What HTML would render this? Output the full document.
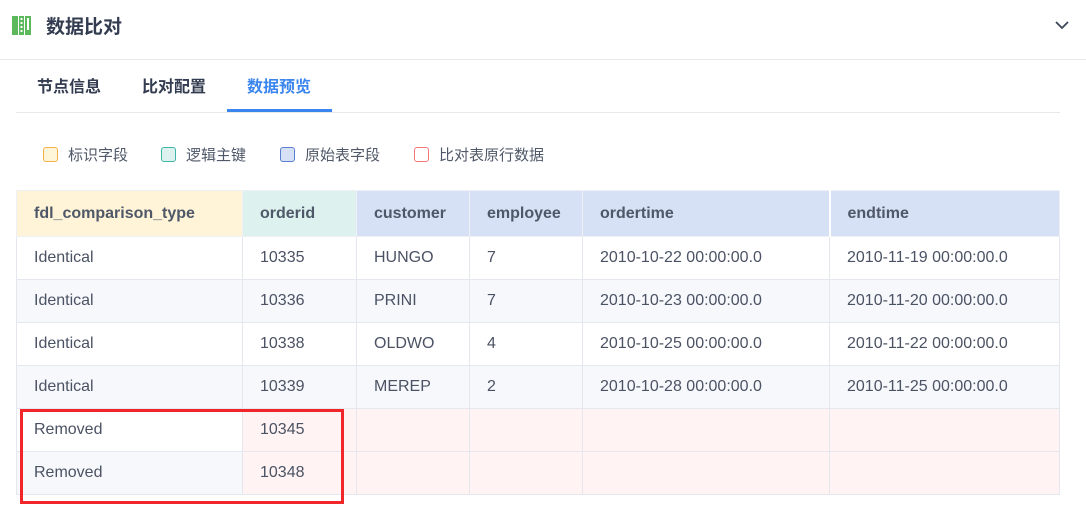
<!DOCTYPE html>
<html><head><meta charset="utf-8"><style>
*{margin:0;padding:0;box-sizing:border-box}
body{width:1086px;height:505px;background:#fff;font-family:"Liberation Sans","Noto Sans CJK SC",sans-serif;color:#333c4c;position:relative;overflow:hidden}
.abs{position:absolute}
.title{left:46px;top:14px;font-size:19px;font-weight:bold;color:#333c50;line-height:28px}
.hline{left:0;top:59px;width:1086px;height:1px;background:#e6e8ec}
.tab{top:76px;font-size:16px;font-weight:bold;line-height:24px;color:#333c50}
.leg{top:146px;font-size:15px;color:#4f5868;line-height:20px}
.box{display:inline-block;width:15px;height:15px;border-radius:3px;border:1.5px solid;vertical-align:-2px;margin-right:10px}
table{position:absolute;left:16px;top:190px;border-collapse:collapse;font-size:16px;table-layout:fixed}
td,th{height:43px;padding:0 0 0 17px;text-align:left;border:1px solid #e4e7ee;color:#4a5263;font-weight:normal;white-space:nowrap}
th{height:46px;font-weight:bold;color:#4f5868;border-color:#eef0f5}
tr:nth-child(odd) td{background:#f7f8fc}
tr td{background:#fff}
.pk{background:#fff4f3 !important}
</style></head><body>
<svg class="abs" style="left:12px;top:16px" width="20" height="20" viewBox="0 0 20 20">
<rect x="0" y="0" width="6" height="19" fill="#5cb85c"/>
<rect x="7" y="0" width="5" height="19" fill="#5cb85c"/>
<rect x="13" y="0" width="6" height="19" fill="#5cb85c"/>
<rect x="8.5" y="2" width="2" height="2" fill="#fff"/><rect x="8.5" y="6" width="2" height="2" fill="#fff"/><rect x="8.5" y="10" width="2" height="2" fill="#fff"/><rect x="8.5" y="14" width="2" height="2" fill="#fff"/>
<rect x="15" y="2" width="2" height="12" fill="#fff"/>
</svg>
<div class="abs title">数据比对</div>
<svg class="abs" style="left:1054px;top:19px" width="16" height="12" viewBox="0 0 16 12"><path d="M2 3 L8 9 L14 3" fill="none" stroke="#3d4557" stroke-width="1.8"/></svg>
<div class="abs hline"></div>
<div class="abs tab" style="left:37px">节点信息</div>
<div class="abs tab" style="left:142px">比对配置</div>
<div class="abs tab" style="left:247px;color:#3a85ee">数据预览</div>
<div class="abs" style="left:16px;top:112px;width:1044px;height:1px;background:#e6e8ec"></div>
<div class="abs" style="left:227px;top:109px;width:105px;height:3px;background:#3a85ee"></div>
<div class="abs leg" style="left:43px"><span class="box" style="border-color:#f5b04a;background:#fff5d9"></span>标识字段</div>
<div class="abs leg" style="left:161px"><span class="box" style="border-color:#3fb5a8;background:#ddf2ef"></span>逻辑主键</div>
<div class="abs leg" style="left:280px"><span class="box" style="border-color:#5b7fd0;background:#d6e1f5"></span>原始表字段</div>
<div class="abs leg" style="left:414px"><span class="box" style="border-color:#f07a7a;background:#fff"></span>比对表原行数据</div>
<table>
<colgroup><col style="width:226px"><col style="width:114px"><col style="width:113px"><col style="width:113px"><col style="width:247px"><col style="width:230px"></colgroup>
<tr><th style="background:#fff4d8">fdl_comparison_type</th><th style="background:#ddf2ef">orderid</th><th style="background:#d6e1f5">customer</th><th style="background:#d6e1f5">employee</th><th style="background:#d6e1f5">ordertime</th><th style="background:#d6e1f5;border-left:2px solid #fff">endtime</th></tr>
<tr><td>Identical</td><td>10335</td><td>HUNGO</td><td>7</td><td>2010-10-22 00:00:00.0</td><td>2010-11-19 00:00:00.0</td></tr>
<tr><td>Identical</td><td>10336</td><td>PRINI</td><td>7</td><td>2010-10-23 00:00:00.0</td><td>2010-11-20 00:00:00.0</td></tr>
<tr><td>Identical</td><td>10338</td><td>OLDWO</td><td>4</td><td>2010-10-25 00:00:00.0</td><td>2010-11-22 00:00:00.0</td></tr>
<tr><td>Identical</td><td>10339</td><td>MEREP</td><td>2</td><td>2010-10-28 00:00:00.0</td><td>2010-11-25 00:00:00.0</td></tr>
<tr><td>Removed</td><td class="pk">10345</td><td class="pk"></td><td class="pk"></td><td class="pk"></td><td class="pk"></td></tr>
<tr><td>Removed</td><td class="pk">10348</td><td class="pk"></td><td class="pk"></td><td class="pk"></td><td class="pk"></td></tr>
</table>
<div class="abs" style="left:20px;top:409px;width:324px;height:95px;border:3px solid #f0262b"></div>
</body></html>
